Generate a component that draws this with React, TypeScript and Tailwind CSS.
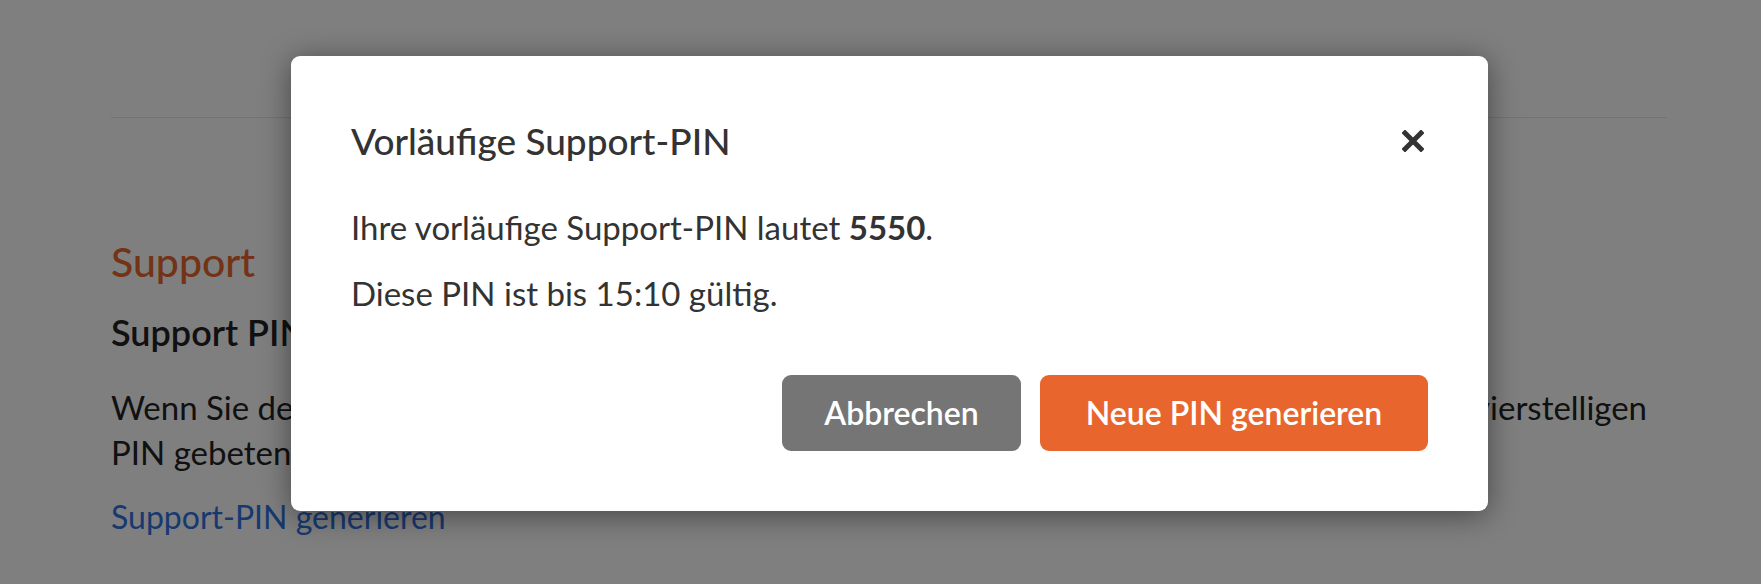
import React from "react"

const font = { fontFamily: "Lato, 'Noto Sans', sans-serif" }

const CloseIcon = () => (
  <svg width="22" height="22" viewBox="0 0 22 22" aria-hidden="true">
    <path d="M3 3 L19 19 M19 3 L3 19" stroke="#333333" strokeWidth="5" strokeLinecap="square" />
  </svg>
)

const SupportPage = () => (
  <div className="ml-[111px] w-[1556px] pt-[117px]">
    <div className="border-t border-[#e6e6e6]" />
    <h2 className="mt-[120px] text-[41px] leading-[48px] font-medium text-[#e8662d]">Support</h2>
    <h3 className="mt-[26px] text-[36px] leading-[40px] font-semibold text-[#222222]">Support PIN</h3>
    <p className="mt-[33px] text-[33px] leading-[45px] text-[#222222]">
      <span className="block whitespace-nowrap">
        Wenn Sie den Kundensupport telefonisch kontaktieren, werden Sie möglicherweise nach Ihrer vierstelligen
      </span>
      <span className="block whitespace-nowrap">PIN gebeten, um Ihre Identität zu bestätigen.</span>
    </p>
    <a className="mt-[19px] block text-[32px] leading-[45px] text-[#2f72e0]">Support-PIN generieren</a>
  </div>
)

const PinDialog = () => (
  <div className="w-[1197px] rounded-[9px] bg-white px-[60px] pt-[65px] pb-[60px] shadow-[0_4px_30px_rgba(0,0,0,0.45)]">
    <div className="flex items-center justify-between">
      <h1 className="text-[37px] leading-[40px] font-medium text-[#333333]">Vorläufige Support-PIN</h1>
      <button className="mr-[4px] flex h-[22px] w-[22px] items-center justify-center">
        <CloseIcon />
      </button>
    </div>
    <p className="mt-[46px] text-[33px] leading-[40px] text-[#333333]">
      Ihre vorläufige Support-PIN lautet <strong className="font-bold">5550</strong>.
    </p>
    <p className="mt-[26px] text-[33px] leading-[40px] text-[#333333]">Diese PIN ist bis 15:10 gültig.</p>
    <div className="mt-[62px] flex justify-end gap-[19px]">
      <button className="h-[76px] w-[239px] rounded-[9px] bg-[#757575] text-[32px] font-semibold text-white">
        Abbrechen
      </button>
      <button className="h-[76px] w-[388px] rounded-[9px] bg-[#e8662d] text-[32px] font-semibold text-white">
        Neue PIN generieren
      </button>
    </div>
  </div>
)

export default function App() {
  return (
    <div className="relative h-[584px] w-full overflow-hidden bg-white" style={font}>
      <SupportPage />
      <div className="absolute inset-0 bg-black/50" />
      <div className="absolute left-[291px] top-[56px]">
        <PinDialog />
      </div>
    </div>
  )
}
